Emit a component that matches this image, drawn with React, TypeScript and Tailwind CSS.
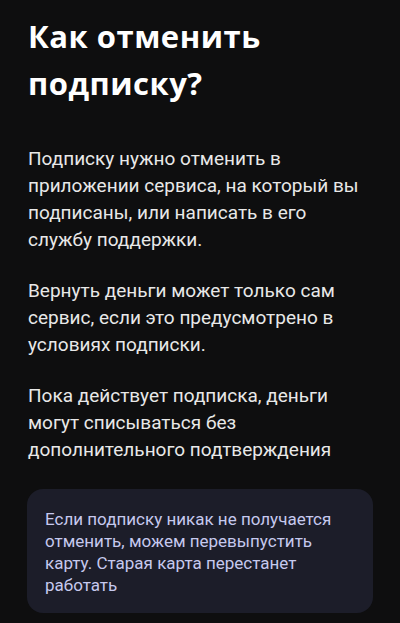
import React from "react";

export default function App() {
  return (
    <div className="min-h-[623px] w-[400px] bg-[#0e0e0f] px-7 pt-[13px] pb-[10px]" style={{ fontFamily: "Roboto, 'Noto Sans', sans-serif" }}>
      <h1 className="text-[31px] leading-[47px] font-bold text-white tracking-[0.5px]" style={{ fontFamily: "'Open Sans', 'Noto Sans', sans-serif" }}>
        Как отменить подписку?
      </h1>
      <div className="mt-[38px] flex flex-col gap-[24px] text-[19px] leading-[27px] text-[#e8e8e8] pr-[11px]">
        <p>Подписку нужно отменить в приложении сервиса, на который вы подписаны, или написать в его службу поддержки.</p>
        <p>Вернуть деньги может только сам сервис, если это предусмотрено в условиях подписки.</p>
        <p>Пока действует подписка, деньги могут списываться без дополнительного подтверждения</p>
      </div>
      <div className="mt-[26px] -mx-[1px] rounded-[16px] bg-[#1c1d29] px-[18px] pt-[19px] pb-[17px]">
        <p className="text-[17px] leading-[22px] text-[#c6c9ee]">
          Если подписку никак не получается отменить, можем перевыпустить карту. Старая карта перестанет работать
        </p>
      </div>
    </div>
  );
}
